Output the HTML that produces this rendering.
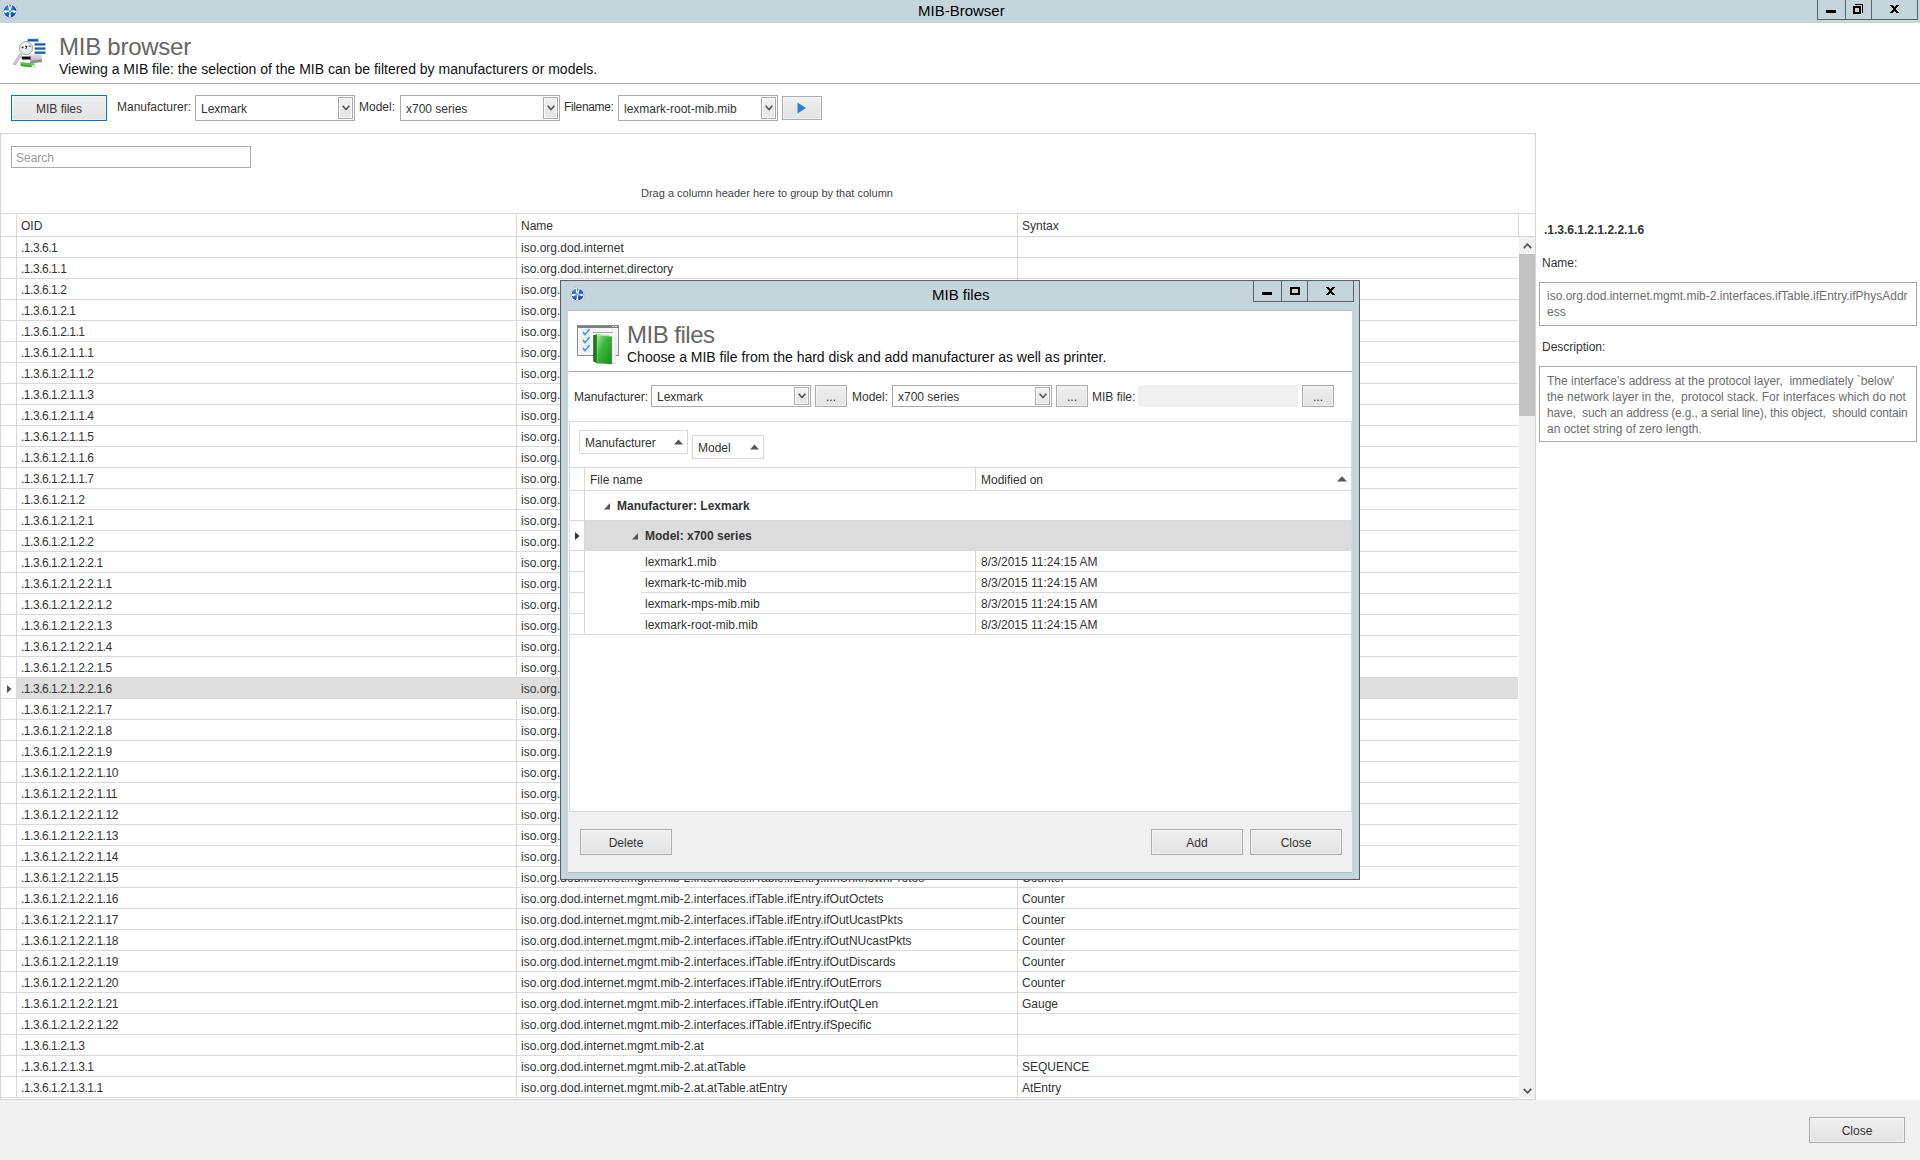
<!DOCTYPE html><html><head><meta charset="utf-8"><style>
html,body{margin:0;padding:0;}
body{width:1920px;height:1160px;position:relative;overflow:hidden;background:#fff;font-family:"Liberation Sans",sans-serif;}
body div, body svg{position:absolute;}
.t{white-space:pre;}
</style></head><body>
<div style="left:0px;top:0px;width:1920px;height:23px;background:#c4d6dc"></div>
<svg style="left:2px;top:3px" width="16" height="16" viewBox="0 0 16 16">
<defs><radialGradient id="aig2" cx="0.4" cy="0.35" r="0.7"><stop offset="0" stop-color="#3f8fdc"/><stop offset="1" stop-color="#0048a8"/></radialGradient></defs>
<circle cx="8" cy="8" r="7.4" fill="#fff" stroke="#a9a9a9" stroke-width="0.9" stroke-dasharray="1.2 0.8"/>
<circle cx="8" cy="8" r="6.4" fill="url(#aig2)"/>
<path d="M8 8 L6.6 2 M8 8 L9.6 2.2 M8 8 L2.2 8.6 M8 8 L13.8 8.6 M8 8 L7.8 14" stroke="#fff" stroke-width="1.3"/>
<circle cx="3.6" cy="8.6" r="1.3" fill="#fff"/><circle cx="12.4" cy="8.6" r="1.3" fill="#fff"/><circle cx="7.8" cy="13" r="1.1" fill="#fff"/>
<circle cx="8" cy="8" r="1.1" fill="#8a8a8a"/>
</svg>
<div class="t" style="left:918px;top:3px;font-size:15px;line-height:15px;color:#000;">MIB-Browser</div>
<div style="left:1817px;top:0px;width:101px;height:20px;border:1px solid #5f6368;border-top:none;box-sizing:border-box"></div>
<div style="left:1845px;top:0px;width:1px;height:20px;background:#5f6368"></div>
<div style="left:1871px;top:0px;width:1px;height:20px;background:#5f6368"></div>
<div style="left:1826px;top:10px;width:10px;height:3px;background:#000"></div>
<div style="left:1855px;top:4px;width:8px;height:9px;border:1px solid #000;border-left:none;border-bottom:none;box-sizing:border-box"></div>
<div style="left:1853px;top:6px;width:8px;height:8px;border:2px solid #000;box-sizing:border-box"></div>
<svg style="left:1890px;top:5px" width="9" height="8" viewBox="0 0 9 8" shape-rendering="crispEdges"><path d="M0 0h3v1h-3zM6 0h3v1h-3zM1 1h3v1h-3zM5 1h3v1h-3zM2 2h5v1h-5zM3 3h3v1h-3zM3 4h3v1h-3zM2 5h5v1h-5zM1 6h3v1h-3zM5 6h3v1h-3zM0 7h3v1h-3zM6 7h3v1h-3z" fill="#000"/></svg>
<svg style="left:10px;top:35px" width="40" height="37" viewBox="0 0 40 37">
<defs>
<linearGradient id="hb" x1="0" y1="0" x2="0" y2="1"><stop offset="0" stop-color="#2a78c8"/><stop offset="1" stop-color="#0a4488"/></linearGradient>
<linearGradient id="pr" x1="0" y1="0" x2="0" y2="1"><stop offset="0" stop-color="#e6e6e6"/><stop offset="1" stop-color="#a9a9a9"/></linearGradient>
<radialGradient id="lens" cx="0.45" cy="0.4" r="0.6"><stop offset="0" stop-color="#ffffff"/><stop offset="1" stop-color="#d5e3ee"/></radialGradient>
</defs>
<rect x="17.3" y="3.8" width="11.4" height="3" fill="url(#hb)" stroke="#d9dde2" stroke-width="0.5"/>
<rect x="24.6" y="8" width="11" height="2.8" fill="url(#hb)" stroke="#d9dde2" stroke-width="0.5"/>
<rect x="24.6" y="12.1" width="11" height="2.8" fill="url(#hb)" stroke="#d9dde2" stroke-width="0.5"/>
<rect x="24.6" y="16.2" width="11" height="2.8" fill="url(#hb)" stroke="#d9dde2" stroke-width="0.5"/>
<path d="M19 19.5 L31.5 19 L32 26 L20 27.5 Z" fill="url(#pr)"/>
<path d="M19 26 L32 24.5 L32 27 L21 28.5 Z" fill="#8d8d8d"/>
<path d="M11.5 21.5 L20.5 21.5 L20.5 25 L12 25 Z" fill="#111"/>
<path d="M11.5 24.5 L20 24.5 L20.5 27 L12 27 Z" fill="#f4f4f4"/>
<path d="M10.5 27 L24.5 28.5 L25 32.5 L11 31 Z" fill="#5cbf4e"/>
<path d="M10.5 29.5 L24.5 31 L25 32.5 L11 31 Z" fill="#3a9a34"/>
<path d="M21.5 30 L26 30.5 L26.5 33.5 L22 33 Z" fill="#e8e8e8"/>
<path d="M10.5 20 L4.8 28.7" stroke="#b7b7b7" stroke-width="3.2" stroke-linecap="round"/>
<path d="M10.5 20 L4.8 28.7" stroke="#e9e9e9" stroke-width="1.4" stroke-dasharray="1 1"/>
<circle cx="16" cy="13.1" r="6.6" fill="url(#lens)" stroke="#a8a8a8" stroke-width="1"/>
<circle cx="12.6" cy="12.4" r="0.9" fill="#111"/>
<path d="M15 11.2 L17 11.2 L15.6 14" fill="none" stroke="#111" stroke-width="1"/>
<path d="M18.8 11.2 L20.6 11.2" stroke="#222" stroke-width="1"/>
<path d="M16.5 14.2 L18.8 14.2" stroke="#bbb" stroke-width="0.8"/>
</svg>
<div class="t" style="left:59px;top:35px;font-size:24px;line-height:24px;color:#666666;letter-spacing:-0.25px;">MIB browser</div>
<div class="t" style="left:59px;top:62px;font-size:14px;line-height:14px;color:#101010;">Viewing a MIB file: the selection of the MIB can be filtered by manufacturers or models.</div>
<div style="left:0px;top:83px;width:1920px;height:1px;background:#a8a8a8"></div>
<div style="left:11px;top:95px;width:96px;height:26px;background:linear-gradient(#efefef,#e3e3e3);border:1px solid #0a6fc6;box-sizing:border-box;box-shadow:inset 0 0 0 1px rgba(255,255,255,0.35)"></div>
<div class="t" style="left:11px;top:103px;width:96px;text-align:center;font-size:12px;line-height:12px;color:#333333">MIB files</div>
<div class="t" style="left:117px;top:101px;font-size:12px;line-height:12px;color:#333333;">Manufacturer:</div>
<div style="left:195px;top:95px;width:160px;height:26px;background:#fff;border:1px solid #ababab;box-sizing:border-box"></div>
<div style="left:338px;top:97px;width:15px;height:22px;background:linear-gradient(#f0f0f0,#e5e5e5);border:1px solid #ababab;box-sizing:border-box;box-shadow:inset 0 0 0 1px #fafafa"></div>
<svg style="left:342px;top:105px" width="8" height="6" viewBox="0 0 8 6"><path d="M0.6 0.8 L4 4.6 L7.4 0.8" fill="none" stroke="#555" stroke-width="1.6"/></svg>
<div class="t" style="left:201px;top:103px;font-size:12px;line-height:12px;color:#333333;">Lexmark</div>
<div class="t" style="left:359px;top:101px;font-size:12px;line-height:12px;color:#333333;">Model:</div>
<div style="left:400px;top:95px;width:160px;height:26px;background:#fff;border:1px solid #ababab;box-sizing:border-box"></div>
<div style="left:543px;top:97px;width:15px;height:22px;background:linear-gradient(#f0f0f0,#e5e5e5);border:1px solid #ababab;box-sizing:border-box;box-shadow:inset 0 0 0 1px #fafafa"></div>
<svg style="left:547px;top:105px" width="8" height="6" viewBox="0 0 8 6"><path d="M0.6 0.8 L4 4.6 L7.4 0.8" fill="none" stroke="#555" stroke-width="1.6"/></svg>
<div class="t" style="left:406px;top:103px;font-size:12px;line-height:12px;color:#333333;">x700 series</div>
<div class="t" style="left:564px;top:101px;font-size:12px;line-height:12px;color:#333333;letter-spacing:-0.35px;">Filename:</div>
<div style="left:618px;top:95px;width:160px;height:26px;background:#fff;border:1px solid #ababab;box-sizing:border-box"></div>
<div style="left:761px;top:97px;width:15px;height:22px;background:linear-gradient(#f0f0f0,#e5e5e5);border:1px solid #ababab;box-sizing:border-box;box-shadow:inset 0 0 0 1px #fafafa"></div>
<svg style="left:765px;top:105px" width="8" height="6" viewBox="0 0 8 6"><path d="M0.6 0.8 L4 4.6 L7.4 0.8" fill="none" stroke="#555" stroke-width="1.6"/></svg>
<div class="t" style="left:624px;top:103px;font-size:12px;line-height:12px;color:#333333;">lexmark-root-mib.mib</div>
<div style="left:782px;top:96px;width:40px;height:24px;background:linear-gradient(#efefef,#e3e3e3);border:1px solid #adadad;box-sizing:border-box;box-shadow:inset 0 0 0 1px rgba(255,255,255,0.35)"></div>
<svg style="left:797px;top:102px" width="10" height="12" viewBox="0 0 10 12"><path d="M0.5 0.5 L9 6 L0.5 11.5 Z" fill="#2f7fd8"/></svg>
<div style="left:0px;top:133px;width:1536px;height:967px;border:1px solid #d5d5d5;box-sizing:border-box"></div>
<div style="left:11px;top:146px;width:240px;height:22px;border:1px solid #ababab;box-sizing:border-box"></div>
<div class="t" style="left:16px;top:152px;font-size:12px;line-height:12px;color:#9a9a9a;">Search</div>
<div class="t" style="left:641px;top:188px;font-size:11px;line-height:11px;color:#444;">Drag a column header here to group by that column</div>
<div style="left:1px;top:213px;width:1534px;height:1px;background:#d9d9d9"></div>
<div style="left:1px;top:236px;width:1534px;height:1px;background:#d9d9d9"></div>
<div class="t" style="left:21px;top:220px;font-size:12px;line-height:12px;color:#333333;">OID</div>
<div class="t" style="left:521px;top:220px;font-size:12px;line-height:12px;color:#333333;">Name</div>
<div class="t" style="left:1022px;top:220px;font-size:12px;line-height:12px;color:#333333;">Syntax</div>
<div style="left:16px;top:213px;width:1px;height:884px;background:#d9d9d9"></div>
<div style="left:516px;top:213px;width:1px;height:884px;background:#d9d9d9"></div>
<div style="left:1017px;top:213px;width:1px;height:884px;background:#d9d9d9"></div>
<div style="left:1518px;top:213px;width:1px;height:23px;background:#d9d9d9"></div>
<div style="left:1px;top:257px;width:1517px;height:1px;background:#d9d9d9"></div>
<div class="t" style="left:21px;top:242px;font-size:12px;line-height:12px;color:#333333;letter-spacing:-0.47px;">.1.3.6.1</div>
<div class="t" style="left:521px;top:242px;font-size:12px;line-height:12px;color:#333333;">iso.org.dod.internet</div>
<div style="left:1px;top:278px;width:1517px;height:1px;background:#d9d9d9"></div>
<div class="t" style="left:21px;top:263px;font-size:12px;line-height:12px;color:#333333;letter-spacing:-0.47px;">.1.3.6.1.1</div>
<div class="t" style="left:521px;top:263px;font-size:12px;line-height:12px;color:#333333;">iso.org.dod.internet.directory</div>
<div style="left:1px;top:299px;width:1517px;height:1px;background:#d9d9d9"></div>
<div class="t" style="left:21px;top:284px;font-size:12px;line-height:12px;color:#333333;letter-spacing:-0.47px;">.1.3.6.1.2</div>
<div class="t" style="left:521px;top:284px;font-size:12px;line-height:12px;color:#333333;">iso.org.dod.internet.mgmt</div>
<div style="left:1px;top:320px;width:1517px;height:1px;background:#d9d9d9"></div>
<div class="t" style="left:21px;top:305px;font-size:12px;line-height:12px;color:#333333;letter-spacing:-0.47px;">.1.3.6.1.2.1</div>
<div class="t" style="left:521px;top:305px;font-size:12px;line-height:12px;color:#333333;">iso.org.dod.internet.mgmt.mib-2</div>
<div style="left:1px;top:341px;width:1517px;height:1px;background:#d9d9d9"></div>
<div class="t" style="left:21px;top:326px;font-size:12px;line-height:12px;color:#333333;letter-spacing:-0.47px;">.1.3.6.1.2.1.1</div>
<div class="t" style="left:521px;top:326px;font-size:12px;line-height:12px;color:#333333;">iso.org.dod.internet.mgmt.mib-2.system</div>
<div style="left:1px;top:362px;width:1517px;height:1px;background:#d9d9d9"></div>
<div class="t" style="left:21px;top:347px;font-size:12px;line-height:12px;color:#333333;letter-spacing:-0.47px;">.1.3.6.1.2.1.1.1</div>
<div class="t" style="left:521px;top:347px;font-size:12px;line-height:12px;color:#333333;">iso.org.dod.internet.mgmt.mib-2.system.sysDescr</div>
<div class="t" style="left:1022px;top:347px;font-size:12px;line-height:12px;color:#333333;">DisplayString</div>
<div style="left:1px;top:383px;width:1517px;height:1px;background:#d9d9d9"></div>
<div class="t" style="left:21px;top:368px;font-size:12px;line-height:12px;color:#333333;letter-spacing:-0.47px;">.1.3.6.1.2.1.1.2</div>
<div class="t" style="left:521px;top:368px;font-size:12px;line-height:12px;color:#333333;">iso.org.dod.internet.mgmt.mib-2.system.sysObjectID</div>
<div class="t" style="left:1022px;top:368px;font-size:12px;line-height:12px;color:#333333;">OBJECT IDENTIFIER</div>
<div style="left:1px;top:404px;width:1517px;height:1px;background:#d9d9d9"></div>
<div class="t" style="left:21px;top:389px;font-size:12px;line-height:12px;color:#333333;letter-spacing:-0.47px;">.1.3.6.1.2.1.1.3</div>
<div class="t" style="left:521px;top:389px;font-size:12px;line-height:12px;color:#333333;">iso.org.dod.internet.mgmt.mib-2.system.sysUpTime</div>
<div class="t" style="left:1022px;top:389px;font-size:12px;line-height:12px;color:#333333;">TimeTicks</div>
<div style="left:1px;top:425px;width:1517px;height:1px;background:#d9d9d9"></div>
<div class="t" style="left:21px;top:410px;font-size:12px;line-height:12px;color:#333333;letter-spacing:-0.47px;">.1.3.6.1.2.1.1.4</div>
<div class="t" style="left:521px;top:410px;font-size:12px;line-height:12px;color:#333333;">iso.org.dod.internet.mgmt.mib-2.system.sysContact</div>
<div class="t" style="left:1022px;top:410px;font-size:12px;line-height:12px;color:#333333;">DisplayString</div>
<div style="left:1px;top:446px;width:1517px;height:1px;background:#d9d9d9"></div>
<div class="t" style="left:21px;top:431px;font-size:12px;line-height:12px;color:#333333;letter-spacing:-0.47px;">.1.3.6.1.2.1.1.5</div>
<div class="t" style="left:521px;top:431px;font-size:12px;line-height:12px;color:#333333;">iso.org.dod.internet.mgmt.mib-2.system.sysName</div>
<div class="t" style="left:1022px;top:431px;font-size:12px;line-height:12px;color:#333333;">DisplayString</div>
<div style="left:1px;top:467px;width:1517px;height:1px;background:#d9d9d9"></div>
<div class="t" style="left:21px;top:452px;font-size:12px;line-height:12px;color:#333333;letter-spacing:-0.47px;">.1.3.6.1.2.1.1.6</div>
<div class="t" style="left:521px;top:452px;font-size:12px;line-height:12px;color:#333333;">iso.org.dod.internet.mgmt.mib-2.system.sysLocation</div>
<div class="t" style="left:1022px;top:452px;font-size:12px;line-height:12px;color:#333333;">DisplayString</div>
<div style="left:1px;top:488px;width:1517px;height:1px;background:#d9d9d9"></div>
<div class="t" style="left:21px;top:473px;font-size:12px;line-height:12px;color:#333333;letter-spacing:-0.47px;">.1.3.6.1.2.1.1.7</div>
<div class="t" style="left:521px;top:473px;font-size:12px;line-height:12px;color:#333333;">iso.org.dod.internet.mgmt.mib-2.system.sysServices</div>
<div class="t" style="left:1022px;top:473px;font-size:12px;line-height:12px;color:#333333;">INTEGER</div>
<div style="left:1px;top:509px;width:1517px;height:1px;background:#d9d9d9"></div>
<div class="t" style="left:21px;top:494px;font-size:12px;line-height:12px;color:#333333;letter-spacing:-0.47px;">.1.3.6.1.2.1.2</div>
<div class="t" style="left:521px;top:494px;font-size:12px;line-height:12px;color:#333333;">iso.org.dod.internet.mgmt.mib-2.interfaces</div>
<div style="left:1px;top:530px;width:1517px;height:1px;background:#d9d9d9"></div>
<div class="t" style="left:21px;top:515px;font-size:12px;line-height:12px;color:#333333;letter-spacing:-0.47px;">.1.3.6.1.2.1.2.1</div>
<div class="t" style="left:521px;top:515px;font-size:12px;line-height:12px;color:#333333;">iso.org.dod.internet.mgmt.mib-2.interfaces.ifNumber</div>
<div class="t" style="left:1022px;top:515px;font-size:12px;line-height:12px;color:#333333;">INTEGER</div>
<div style="left:1px;top:551px;width:1517px;height:1px;background:#d9d9d9"></div>
<div class="t" style="left:21px;top:536px;font-size:12px;line-height:12px;color:#333333;letter-spacing:-0.47px;">.1.3.6.1.2.1.2.2</div>
<div class="t" style="left:521px;top:536px;font-size:12px;line-height:12px;color:#333333;">iso.org.dod.internet.mgmt.mib-2.interfaces.ifTable</div>
<div class="t" style="left:1022px;top:536px;font-size:12px;line-height:12px;color:#333333;">SEQUENCE</div>
<div style="left:1px;top:572px;width:1517px;height:1px;background:#d9d9d9"></div>
<div class="t" style="left:21px;top:557px;font-size:12px;line-height:12px;color:#333333;letter-spacing:-0.47px;">.1.3.6.1.2.1.2.2.1</div>
<div class="t" style="left:521px;top:557px;font-size:12px;line-height:12px;color:#333333;">iso.org.dod.internet.mgmt.mib-2.interfaces.ifTable.ifEntry</div>
<div class="t" style="left:1022px;top:557px;font-size:12px;line-height:12px;color:#333333;">IfEntry</div>
<div style="left:1px;top:593px;width:1517px;height:1px;background:#d9d9d9"></div>
<div class="t" style="left:21px;top:578px;font-size:12px;line-height:12px;color:#333333;letter-spacing:-0.47px;">.1.3.6.1.2.1.2.2.1.1</div>
<div class="t" style="left:521px;top:578px;font-size:12px;line-height:12px;color:#333333;">iso.org.dod.internet.mgmt.mib-2.interfaces.ifTable.ifEntry.ifIndex</div>
<div class="t" style="left:1022px;top:578px;font-size:12px;line-height:12px;color:#333333;">INTEGER</div>
<div style="left:1px;top:614px;width:1517px;height:1px;background:#d9d9d9"></div>
<div class="t" style="left:21px;top:599px;font-size:12px;line-height:12px;color:#333333;letter-spacing:-0.47px;">.1.3.6.1.2.1.2.2.1.2</div>
<div class="t" style="left:521px;top:599px;font-size:12px;line-height:12px;color:#333333;">iso.org.dod.internet.mgmt.mib-2.interfaces.ifTable.ifEntry.ifDescr</div>
<div class="t" style="left:1022px;top:599px;font-size:12px;line-height:12px;color:#333333;">DisplayString</div>
<div style="left:1px;top:635px;width:1517px;height:1px;background:#d9d9d9"></div>
<div class="t" style="left:21px;top:620px;font-size:12px;line-height:12px;color:#333333;letter-spacing:-0.47px;">.1.3.6.1.2.1.2.2.1.3</div>
<div class="t" style="left:521px;top:620px;font-size:12px;line-height:12px;color:#333333;">iso.org.dod.internet.mgmt.mib-2.interfaces.ifTable.ifEntry.ifType</div>
<div class="t" style="left:1022px;top:620px;font-size:12px;line-height:12px;color:#333333;">INTEGER</div>
<div style="left:1px;top:656px;width:1517px;height:1px;background:#d9d9d9"></div>
<div class="t" style="left:21px;top:641px;font-size:12px;line-height:12px;color:#333333;letter-spacing:-0.47px;">.1.3.6.1.2.1.2.2.1.4</div>
<div class="t" style="left:521px;top:641px;font-size:12px;line-height:12px;color:#333333;">iso.org.dod.internet.mgmt.mib-2.interfaces.ifTable.ifEntry.ifMtu</div>
<div class="t" style="left:1022px;top:641px;font-size:12px;line-height:12px;color:#333333;">INTEGER</div>
<div style="left:1px;top:677px;width:1517px;height:1px;background:#d9d9d9"></div>
<div class="t" style="left:21px;top:662px;font-size:12px;line-height:12px;color:#333333;letter-spacing:-0.47px;">.1.3.6.1.2.1.2.2.1.5</div>
<div class="t" style="left:521px;top:662px;font-size:12px;line-height:12px;color:#333333;">iso.org.dod.internet.mgmt.mib-2.interfaces.ifTable.ifEntry.ifSpeed</div>
<div class="t" style="left:1022px;top:662px;font-size:12px;line-height:12px;color:#333333;">Gauge</div>
<div style="left:17px;top:678px;width:1501px;height:20px;background:#dedede"></div>
<svg style="left:7px;top:685px" width="5" height="8" viewBox="0 0 5 8"><path d="M0 0 L4.5 4 L0 8 Z" fill="#555"/></svg>
<div style="left:1px;top:698px;width:1517px;height:1px;background:#d9d9d9"></div>
<div class="t" style="left:21px;top:683px;font-size:12px;line-height:12px;color:#333333;letter-spacing:-0.47px;">.1.3.6.1.2.1.2.2.1.6</div>
<div class="t" style="left:521px;top:683px;font-size:12px;line-height:12px;color:#333333;">iso.org.dod.internet.mgmt.mib-2.interfaces.ifTable.ifEntry.ifPhysAddress</div>
<div class="t" style="left:1022px;top:683px;font-size:12px;line-height:12px;color:#333333;">PhysAddress</div>
<div style="left:1px;top:719px;width:1517px;height:1px;background:#d9d9d9"></div>
<div class="t" style="left:21px;top:704px;font-size:12px;line-height:12px;color:#333333;letter-spacing:-0.47px;">.1.3.6.1.2.1.2.2.1.7</div>
<div class="t" style="left:521px;top:704px;font-size:12px;line-height:12px;color:#333333;">iso.org.dod.internet.mgmt.mib-2.interfaces.ifTable.ifEntry.ifAdminStatus</div>
<div class="t" style="left:1022px;top:704px;font-size:12px;line-height:12px;color:#333333;">INTEGER</div>
<div style="left:1px;top:740px;width:1517px;height:1px;background:#d9d9d9"></div>
<div class="t" style="left:21px;top:725px;font-size:12px;line-height:12px;color:#333333;letter-spacing:-0.47px;">.1.3.6.1.2.1.2.2.1.8</div>
<div class="t" style="left:521px;top:725px;font-size:12px;line-height:12px;color:#333333;">iso.org.dod.internet.mgmt.mib-2.interfaces.ifTable.ifEntry.ifOperStatus</div>
<div class="t" style="left:1022px;top:725px;font-size:12px;line-height:12px;color:#333333;">INTEGER</div>
<div style="left:1px;top:761px;width:1517px;height:1px;background:#d9d9d9"></div>
<div class="t" style="left:21px;top:746px;font-size:12px;line-height:12px;color:#333333;letter-spacing:-0.47px;">.1.3.6.1.2.1.2.2.1.9</div>
<div class="t" style="left:521px;top:746px;font-size:12px;line-height:12px;color:#333333;">iso.org.dod.internet.mgmt.mib-2.interfaces.ifTable.ifEntry.ifLastChange</div>
<div class="t" style="left:1022px;top:746px;font-size:12px;line-height:12px;color:#333333;">TimeTicks</div>
<div style="left:1px;top:782px;width:1517px;height:1px;background:#d9d9d9"></div>
<div class="t" style="left:21px;top:767px;font-size:12px;line-height:12px;color:#333333;letter-spacing:-0.47px;">.1.3.6.1.2.1.2.2.1.10</div>
<div class="t" style="left:521px;top:767px;font-size:12px;line-height:12px;color:#333333;">iso.org.dod.internet.mgmt.mib-2.interfaces.ifTable.ifEntry.ifInOctets</div>
<div class="t" style="left:1022px;top:767px;font-size:12px;line-height:12px;color:#333333;">Counter</div>
<div style="left:1px;top:803px;width:1517px;height:1px;background:#d9d9d9"></div>
<div class="t" style="left:21px;top:788px;font-size:12px;line-height:12px;color:#333333;letter-spacing:-0.47px;">.1.3.6.1.2.1.2.2.1.11</div>
<div class="t" style="left:521px;top:788px;font-size:12px;line-height:12px;color:#333333;">iso.org.dod.internet.mgmt.mib-2.interfaces.ifTable.ifEntry.ifInUcastPkts</div>
<div class="t" style="left:1022px;top:788px;font-size:12px;line-height:12px;color:#333333;">Counter</div>
<div style="left:1px;top:824px;width:1517px;height:1px;background:#d9d9d9"></div>
<div class="t" style="left:21px;top:809px;font-size:12px;line-height:12px;color:#333333;letter-spacing:-0.47px;">.1.3.6.1.2.1.2.2.1.12</div>
<div class="t" style="left:521px;top:809px;font-size:12px;line-height:12px;color:#333333;">iso.org.dod.internet.mgmt.mib-2.interfaces.ifTable.ifEntry.ifInNUcastPkts</div>
<div class="t" style="left:1022px;top:809px;font-size:12px;line-height:12px;color:#333333;">Counter</div>
<div style="left:1px;top:845px;width:1517px;height:1px;background:#d9d9d9"></div>
<div class="t" style="left:21px;top:830px;font-size:12px;line-height:12px;color:#333333;letter-spacing:-0.47px;">.1.3.6.1.2.1.2.2.1.13</div>
<div class="t" style="left:521px;top:830px;font-size:12px;line-height:12px;color:#333333;">iso.org.dod.internet.mgmt.mib-2.interfaces.ifTable.ifEntry.ifInDiscards</div>
<div class="t" style="left:1022px;top:830px;font-size:12px;line-height:12px;color:#333333;">Counter</div>
<div style="left:1px;top:866px;width:1517px;height:1px;background:#d9d9d9"></div>
<div class="t" style="left:21px;top:851px;font-size:12px;line-height:12px;color:#333333;letter-spacing:-0.47px;">.1.3.6.1.2.1.2.2.1.14</div>
<div class="t" style="left:521px;top:851px;font-size:12px;line-height:12px;color:#333333;">iso.org.dod.internet.mgmt.mib-2.interfaces.ifTable.ifEntry.ifInErrors</div>
<div class="t" style="left:1022px;top:851px;font-size:12px;line-height:12px;color:#333333;">Counter</div>
<div style="left:1px;top:887px;width:1517px;height:1px;background:#d9d9d9"></div>
<div class="t" style="left:21px;top:872px;font-size:12px;line-height:12px;color:#333333;letter-spacing:-0.47px;">.1.3.6.1.2.1.2.2.1.15</div>
<div class="t" style="left:521px;top:872px;font-size:12px;line-height:12px;color:#333333;">iso.org.dod.internet.mgmt.mib-2.interfaces.ifTable.ifEntry.ifInUnknownProtos</div>
<div class="t" style="left:1022px;top:872px;font-size:12px;line-height:12px;color:#333333;">Counter</div>
<div style="left:1px;top:908px;width:1517px;height:1px;background:#d9d9d9"></div>
<div class="t" style="left:21px;top:893px;font-size:12px;line-height:12px;color:#333333;letter-spacing:-0.47px;">.1.3.6.1.2.1.2.2.1.16</div>
<div class="t" style="left:521px;top:893px;font-size:12px;line-height:12px;color:#333333;">iso.org.dod.internet.mgmt.mib-2.interfaces.ifTable.ifEntry.ifOutOctets</div>
<div class="t" style="left:1022px;top:893px;font-size:12px;line-height:12px;color:#333333;">Counter</div>
<div style="left:1px;top:929px;width:1517px;height:1px;background:#d9d9d9"></div>
<div class="t" style="left:21px;top:914px;font-size:12px;line-height:12px;color:#333333;letter-spacing:-0.47px;">.1.3.6.1.2.1.2.2.1.17</div>
<div class="t" style="left:521px;top:914px;font-size:12px;line-height:12px;color:#333333;">iso.org.dod.internet.mgmt.mib-2.interfaces.ifTable.ifEntry.ifOutUcastPkts</div>
<div class="t" style="left:1022px;top:914px;font-size:12px;line-height:12px;color:#333333;">Counter</div>
<div style="left:1px;top:950px;width:1517px;height:1px;background:#d9d9d9"></div>
<div class="t" style="left:21px;top:935px;font-size:12px;line-height:12px;color:#333333;letter-spacing:-0.47px;">.1.3.6.1.2.1.2.2.1.18</div>
<div class="t" style="left:521px;top:935px;font-size:12px;line-height:12px;color:#333333;">iso.org.dod.internet.mgmt.mib-2.interfaces.ifTable.ifEntry.ifOutNUcastPkts</div>
<div class="t" style="left:1022px;top:935px;font-size:12px;line-height:12px;color:#333333;">Counter</div>
<div style="left:1px;top:971px;width:1517px;height:1px;background:#d9d9d9"></div>
<div class="t" style="left:21px;top:956px;font-size:12px;line-height:12px;color:#333333;letter-spacing:-0.47px;">.1.3.6.1.2.1.2.2.1.19</div>
<div class="t" style="left:521px;top:956px;font-size:12px;line-height:12px;color:#333333;">iso.org.dod.internet.mgmt.mib-2.interfaces.ifTable.ifEntry.ifOutDiscards</div>
<div class="t" style="left:1022px;top:956px;font-size:12px;line-height:12px;color:#333333;">Counter</div>
<div style="left:1px;top:992px;width:1517px;height:1px;background:#d9d9d9"></div>
<div class="t" style="left:21px;top:977px;font-size:12px;line-height:12px;color:#333333;letter-spacing:-0.47px;">.1.3.6.1.2.1.2.2.1.20</div>
<div class="t" style="left:521px;top:977px;font-size:12px;line-height:12px;color:#333333;">iso.org.dod.internet.mgmt.mib-2.interfaces.ifTable.ifEntry.ifOutErrors</div>
<div class="t" style="left:1022px;top:977px;font-size:12px;line-height:12px;color:#333333;">Counter</div>
<div style="left:1px;top:1013px;width:1517px;height:1px;background:#d9d9d9"></div>
<div class="t" style="left:21px;top:998px;font-size:12px;line-height:12px;color:#333333;letter-spacing:-0.47px;">.1.3.6.1.2.1.2.2.1.21</div>
<div class="t" style="left:521px;top:998px;font-size:12px;line-height:12px;color:#333333;">iso.org.dod.internet.mgmt.mib-2.interfaces.ifTable.ifEntry.ifOutQLen</div>
<div class="t" style="left:1022px;top:998px;font-size:12px;line-height:12px;color:#333333;">Gauge</div>
<div style="left:1px;top:1034px;width:1517px;height:1px;background:#d9d9d9"></div>
<div class="t" style="left:21px;top:1019px;font-size:12px;line-height:12px;color:#333333;letter-spacing:-0.47px;">.1.3.6.1.2.1.2.2.1.22</div>
<div class="t" style="left:521px;top:1019px;font-size:12px;line-height:12px;color:#333333;">iso.org.dod.internet.mgmt.mib-2.interfaces.ifTable.ifEntry.ifSpecific</div>
<div style="left:1px;top:1055px;width:1517px;height:1px;background:#d9d9d9"></div>
<div class="t" style="left:21px;top:1040px;font-size:12px;line-height:12px;color:#333333;letter-spacing:-0.47px;">.1.3.6.1.2.1.3</div>
<div class="t" style="left:521px;top:1040px;font-size:12px;line-height:12px;color:#333333;">iso.org.dod.internet.mgmt.mib-2.at</div>
<div style="left:1px;top:1076px;width:1517px;height:1px;background:#d9d9d9"></div>
<div class="t" style="left:21px;top:1061px;font-size:12px;line-height:12px;color:#333333;letter-spacing:-0.47px;">.1.3.6.1.2.1.3.1</div>
<div class="t" style="left:521px;top:1061px;font-size:12px;line-height:12px;color:#333333;">iso.org.dod.internet.mgmt.mib-2.at.atTable</div>
<div class="t" style="left:1022px;top:1061px;font-size:12px;line-height:12px;color:#333333;">SEQUENCE</div>
<div style="left:1px;top:1097px;width:1517px;height:1px;background:#d9d9d9"></div>
<div class="t" style="left:21px;top:1082px;font-size:12px;line-height:12px;color:#333333;letter-spacing:-0.47px;">.1.3.6.1.2.1.3.1.1</div>
<div class="t" style="left:521px;top:1082px;font-size:12px;line-height:12px;color:#333333;">iso.org.dod.internet.mgmt.mib-2.at.atTable.atEntry</div>
<div class="t" style="left:1022px;top:1082px;font-size:12px;line-height:12px;color:#333333;">AtEntry</div>
<div style="left:1519px;top:237px;width:16px;height:861px;background:#f0f0f0"></div>
<div style="left:1519px;top:254px;width:16px;height:162px;background:#c2c2c2"></div>
<svg style="left:1523px;top:243px" width="9" height="6" viewBox="0 0 9 6"><path d="M0.8 5.2 L4.5 1.2 L8.2 5.2" fill="none" stroke="#555" stroke-width="1.7"/></svg>
<svg style="left:1523px;top:1088px" width="9" height="6" viewBox="0 0 9 6"><path d="M0.8 0.8 L4.5 4.8 L8.2 0.8" fill="none" stroke="#555" stroke-width="1.7"/></svg>
<div class="t" style="left:1544px;top:224px;font-size:12px;line-height:12px;color:#333333;font-weight:bold;">.1.3.6.1.2.1.2.2.1.6</div>
<div class="t" style="left:1542px;top:257px;font-size:12px;line-height:12px;color:#333333;">Name:</div>
<div style="left:1539px;top:282px;width:378px;height:44px;border:1px solid #ababab;box-sizing:border-box"></div>
<div class="t" style="left:1547px;top:290px;font-size:12px;line-height:12px;color:#6d6d6d;">iso.org.dod.internet.mgmt.mib-2.interfaces.ifTable.ifEntry.ifPhysAddr</div>
<div class="t" style="left:1547px;top:306px;font-size:12px;line-height:12px;color:#6d6d6d;">ess</div>
<div class="t" style="left:1542px;top:341px;font-size:12px;line-height:12px;color:#333333;">Description:</div>
<div style="left:1539px;top:366px;width:378px;height:76px;border:1px solid #ababab;box-sizing:border-box"></div>
<div class="t" style="left:1547px;top:375px;font-size:12px;line-height:12px;color:#6d6d6d;">The interface's address at the protocol layer,  immediately `below'</div>
<div class="t" style="left:1547px;top:391px;font-size:12px;line-height:12px;color:#6d6d6d;">the network layer in the,  protocol stack. For interfaces which do not</div>
<div class="t" style="left:1547px;top:407px;font-size:12px;line-height:12px;color:#6d6d6d;letter-spacing:-0.14px;">have,  such an address (e.g., a serial line), this object,  should contain</div>
<div class="t" style="left:1547px;top:423px;font-size:12px;line-height:12px;color:#6d6d6d;">an octet string of zero length.</div>
<div style="left:0px;top:1100px;width:1920px;height:60px;background:#f0f0f0"></div>
<div style="left:1809px;top:1117px;width:96px;height:26px;background:linear-gradient(#efefef,#e3e3e3);border:1px solid #adadad;box-sizing:border-box;box-shadow:inset 0 0 0 1px rgba(255,255,255,0.35)"></div>
<div class="t" style="left:1809px;top:1125px;width:96px;text-align:center;font-size:12px;line-height:12px;color:#333333">Close</div>
<div style="left:560px;top:280px;width:800px;height:600px;background:#c4d6dc;border:1px solid #5b6167;box-sizing:border-box"></div>
<svg style="left:570px;top:287px" width="15" height="15" viewBox="0 0 16 16">
<defs><radialGradient id="aig570" cx="0.4" cy="0.35" r="0.7"><stop offset="0" stop-color="#3f8fdc"/><stop offset="1" stop-color="#0048a8"/></radialGradient></defs>
<circle cx="8" cy="8" r="7.4" fill="#fff" stroke="#a9a9a9" stroke-width="0.9" stroke-dasharray="1.2 0.8"/>
<circle cx="8" cy="8" r="6.4" fill="url(#aig570)"/>
<path d="M8 8 L6.6 2 M8 8 L9.6 2.2 M8 8 L2.2 8.6 M8 8 L13.8 8.6 M8 8 L7.8 14" stroke="#fff" stroke-width="1.3"/>
<circle cx="3.6" cy="8.6" r="1.3" fill="#fff"/><circle cx="12.4" cy="8.6" r="1.3" fill="#fff"/><circle cx="7.8" cy="13" r="1.1" fill="#fff"/>
<circle cx="8" cy="8" r="1.1" fill="#8a8a8a"/>
</svg>
<div class="t" style="left:932px;top:287px;font-size:15px;line-height:15px;color:#000;">MIB files</div>
<div style="left:1253px;top:280px;width:101px;height:22px;border:1px solid #5f6368;border-top:none;box-sizing:border-box"></div>
<div style="left:1281px;top:280px;width:1px;height:21px;background:#5f6368"></div>
<div style="left:1307px;top:280px;width:1px;height:21px;background:#5f6368"></div>
<div style="left:1262px;top:292px;width:10px;height:3px;background:#000"></div>
<div style="left:1290px;top:287px;width:10px;height:8px;border:2px solid #000;box-sizing:border-box"></div>
<svg style="left:1326px;top:287px" width="9" height="8" viewBox="0 0 9 8" shape-rendering="crispEdges"><path d="M0 0h3v1h-3zM6 0h3v1h-3zM1 1h3v1h-3zM5 1h3v1h-3zM2 2h5v1h-5zM3 3h3v1h-3zM3 4h3v1h-3zM2 5h5v1h-5zM1 6h3v1h-3zM5 6h3v1h-3zM0 7h3v1h-3zM6 7h3v1h-3z" fill="#000"/></svg>
<div style="left:568px;top:310px;width:784px;height:563px;background:#f0f0f0;border-top:1px solid #aebbc2;border-bottom:1px solid #aebbc2;box-sizing:border-box"></div>
<div style="left:568px;top:311px;width:784px;height:500px;background:#fff"></div>
<svg style="left:577px;top:325px" width="44" height="40" viewBox="0 0 44 40">
<rect x="0.5" y="0.5" width="41" height="30" fill="#f4f4f4" stroke="#8d9094"/>
<rect x="0.5" y="0.5" width="41" height="2.5" fill="#7e8286"/>
<rect x="35" y="1" width="2" height="1" fill="#ddd"/><rect x="38" y="1" width="2" height="1" fill="#ddd"/>
<rect x="6" y="5" width="5" height="5" fill="#fff" stroke="#ccc" stroke-width="0.6"/>
<rect x="6" y="13" width="5" height="5" fill="#fff" stroke="#ccc" stroke-width="0.6"/>
<rect x="6" y="21" width="5" height="5" fill="#fff" stroke="#ccc" stroke-width="0.6"/>
<path d="M6 7 L8 9.5 L12.5 4" fill="none" stroke="#3a9ae8" stroke-width="1.6"/>
<path d="M6 15 L8 17.5 L12.5 12" fill="none" stroke="#3a9ae8" stroke-width="1.6"/>
<path d="M6 23 L8 25.5 L12.5 20" fill="none" stroke="#3a9ae8" stroke-width="1.6"/>
<rect x="16" y="7" width="20" height="0.8" fill="#999"/>
<ellipse cx="33" cy="38.3" rx="6" ry="1.4" fill="#000" opacity="0.18"/>
<path d="M16.3 10.2 L20.2 9.3 L20.2 38.6 L16.3 36.4 Z" fill="url(#spg)"/>
<path d="M20.2 9.3 L35.2 11.2 L35.2 38.9 L20.2 38.6 Z" fill="url(#bookg)"/>
<path d="M20.2 9.3 L35.2 11.2 L36 11.8 L21 10.2 Z" fill="#b9eeb0"/>
<path d="M35.2 11.2 L38.8 12.6 L38.8 37.2 L35.2 38.9 Z" fill="#f7f3f6" stroke="#d8d0d8" stroke-width="0.4"/>
<defs><linearGradient id="bookg" x1="0" y1="0" x2="1" y2="1"><stop offset="0" stop-color="#9be894"/><stop offset="0.4" stop-color="#3db63a"/><stop offset="1" stop-color="#178a1c"/></linearGradient>
<linearGradient id="spg" x1="0" y1="0" x2="1" y2="0"><stop offset="0" stop-color="#0b560e"/><stop offset="1" stop-color="#2e9a30"/></linearGradient></defs>
</svg>
<div class="t" style="left:627px;top:323px;font-size:24px;line-height:24px;color:#666666;letter-spacing:-0.5px;">MIB files</div>
<div class="t" style="left:627px;top:350px;font-size:14px;line-height:14px;color:#101010;">Choose a MIB file from the hard disk and add manufacturer as well as printer.</div>
<div style="left:569px;top:371px;width:783px;height:1px;background:#a8a8a8"></div>
<div class="t" style="left:574px;top:391px;font-size:12px;line-height:12px;color:#333333;">Manufacturer:</div>
<div style="left:651px;top:385px;width:160px;height:22px;background:#fff;border:1px solid #ababab;box-sizing:border-box"></div>
<div style="left:794px;top:387px;width:15px;height:18px;background:linear-gradient(#f0f0f0,#e5e5e5);border:1px solid #ababab;box-sizing:border-box;box-shadow:inset 0 0 0 1px #fafafa"></div>
<svg style="left:798px;top:393px" width="8" height="6" viewBox="0 0 8 6"><path d="M0.6 0.8 L4 4.6 L7.4 0.8" fill="none" stroke="#555" stroke-width="1.6"/></svg>
<div class="t" style="left:657px;top:391px;font-size:12px;line-height:12px;color:#333333;">Lexmark</div>
<div style="left:815px;top:385px;width:32px;height:22px;background:linear-gradient(#efefef,#e3e3e3);border:1px solid #adadad;box-sizing:border-box;box-shadow:inset 0 0 0 1px rgba(255,255,255,0.35)"></div>
<div class="t" style="left:815px;top:391px;width:32px;text-align:center;font-size:12px;line-height:12px;color:#333333">...</div>
<div class="t" style="left:852px;top:391px;font-size:12px;line-height:12px;color:#333333;">Model:</div>
<div style="left:892px;top:385px;width:160px;height:22px;background:#fff;border:1px solid #ababab;box-sizing:border-box"></div>
<div style="left:1035px;top:387px;width:15px;height:18px;background:linear-gradient(#f0f0f0,#e5e5e5);border:1px solid #ababab;box-sizing:border-box;box-shadow:inset 0 0 0 1px #fafafa"></div>
<svg style="left:1039px;top:393px" width="8" height="6" viewBox="0 0 8 6"><path d="M0.6 0.8 L4 4.6 L7.4 0.8" fill="none" stroke="#555" stroke-width="1.6"/></svg>
<div class="t" style="left:898px;top:391px;font-size:12px;line-height:12px;color:#333333;">x700 series</div>
<div style="left:1056px;top:385px;width:32px;height:22px;background:linear-gradient(#efefef,#e3e3e3);border:1px solid #adadad;box-sizing:border-box;box-shadow:inset 0 0 0 1px rgba(255,255,255,0.35)"></div>
<div class="t" style="left:1056px;top:391px;width:32px;text-align:center;font-size:12px;line-height:12px;color:#333333">...</div>
<div class="t" style="left:1092px;top:391px;font-size:12px;line-height:12px;color:#333333;">MIB file:</div>
<div style="left:1138px;top:385px;width:160px;height:22px;background:#f0f0f0"></div>
<div style="left:1302px;top:385px;width:32px;height:22px;background:linear-gradient(#efefef,#e3e3e3);border:1px solid #adadad;box-sizing:border-box;box-shadow:inset 0 0 0 1px rgba(255,255,255,0.35)"></div>
<div class="t" style="left:1302px;top:391px;width:32px;text-align:center;font-size:12px;line-height:12px;color:#333333">...</div>
<div style="left:569px;top:421px;width:783px;height:391px;border:1px solid #d9d9d9;box-sizing:border-box;background:#fff"></div>
<div style="left:579px;top:430px;width:109px;height:24px;border:1px solid #d9d9d9;box-sizing:border-box"></div>
<div class="t" style="left:585px;top:437px;font-size:12px;line-height:12px;color:#333333;">Manufacturer</div>
<svg style="left:674px;top:439px" width="9" height="6" viewBox="0 0 9 6"><path d="M0 5.5 L4.5 0.5 L9 5.5 Z" fill="#555"/></svg>
<div style="left:692px;top:435px;width:72px;height:24px;border:1px solid #d9d9d9;box-sizing:border-box"></div>
<div class="t" style="left:698px;top:442px;font-size:12px;line-height:12px;color:#333333;">Model</div>
<svg style="left:750px;top:444px" width="9" height="6" viewBox="0 0 9 6"><path d="M0 5.5 L4.5 0.5 L9 5.5 Z" fill="#555"/></svg>
<div style="left:570px;top:467px;width:781px;height:1px;background:#d9d9d9"></div>
<div style="left:570px;top:490px;width:781px;height:1px;background:#d9d9d9"></div>
<div style="left:584px;top:467px;width:1px;height:167px;background:#d9d9d9"></div>
<div style="left:975px;top:467px;width:1px;height:23px;background:#d9d9d9"></div>
<div class="t" style="left:590px;top:474px;font-size:12px;line-height:12px;color:#333333;">File name</div>
<div class="t" style="left:981px;top:474px;font-size:12px;line-height:12px;color:#333333;">Modified on</div>
<svg style="left:1337px;top:476px" width="10" height="6" viewBox="0 0 10 6"><path d="M0 5.5 L5 0.3 L10 5.5 Z" fill="#555"/></svg>
<div style="left:570px;top:520px;width:781px;height:1px;background:#d9d9d9"></div>
<svg style="left:604px;top:503px" width="6" height="7" viewBox="0 0 6 7"><path d="M6 0 L6 6.5 L0 6.5 Z" fill="#555"/></svg>
<div class="t" style="left:617px;top:500px;font-size:12px;line-height:12px;color:#333;font-weight:bold;">Manufacturer: Lexmark</div>
<div style="left:585px;top:521px;width:766px;height:29px;background:#dcdcdc"></div>
<svg style="left:575px;top:532px" width="5" height="8" viewBox="0 0 5 8"><path d="M0 0 L4.5 4 L0 8 Z" fill="#333"/></svg>
<svg style="left:632px;top:533px" width="6" height="7" viewBox="0 0 6 7"><path d="M6 0 L6 6.5 L0 6.5 Z" fill="#555"/></svg>
<div class="t" style="left:645px;top:530px;font-size:12px;line-height:12px;color:#333;font-weight:bold;">Model: x700 series</div>
<div style="left:570px;top:550px;width:781px;height:1px;background:#d9d9d9"></div>
<div class="t" style="left:645px;top:556px;font-size:12px;line-height:12px;color:#333333;">lexmark1.mib</div>
<div class="t" style="left:981px;top:556px;font-size:12px;line-height:12px;color:#333333;">8/3/2015 11:24:15 AM</div>
<div style="left:641px;top:571px;width:710px;height:1px;background:#d9d9d9"></div>
<div style="left:570px;top:571px;width:14px;height:1px;background:#d9d9d9"></div>
<div style="left:975px;top:551px;width:1px;height:20px;background:#d9d9d9"></div>
<div class="t" style="left:645px;top:577px;font-size:12px;line-height:12px;color:#333333;">lexmark-tc-mib.mib</div>
<div class="t" style="left:981px;top:577px;font-size:12px;line-height:12px;color:#333333;">8/3/2015 11:24:15 AM</div>
<div style="left:641px;top:592px;width:710px;height:1px;background:#d9d9d9"></div>
<div style="left:570px;top:592px;width:14px;height:1px;background:#d9d9d9"></div>
<div style="left:975px;top:572px;width:1px;height:20px;background:#d9d9d9"></div>
<div class="t" style="left:645px;top:598px;font-size:12px;line-height:12px;color:#333333;">lexmark-mps-mib.mib</div>
<div class="t" style="left:981px;top:598px;font-size:12px;line-height:12px;color:#333333;">8/3/2015 11:24:15 AM</div>
<div style="left:641px;top:613px;width:710px;height:1px;background:#d9d9d9"></div>
<div style="left:570px;top:613px;width:14px;height:1px;background:#d9d9d9"></div>
<div style="left:975px;top:593px;width:1px;height:20px;background:#d9d9d9"></div>
<div class="t" style="left:645px;top:619px;font-size:12px;line-height:12px;color:#333333;">lexmark-root-mib.mib</div>
<div class="t" style="left:981px;top:619px;font-size:12px;line-height:12px;color:#333333;">8/3/2015 11:24:15 AM</div>
<div style="left:570px;top:634px;width:781px;height:1px;background:#d9d9d9"></div>
<div style="left:975px;top:614px;width:1px;height:20px;background:#d9d9d9"></div>
<div style="left:580px;top:829px;width:92px;height:26px;background:linear-gradient(#efefef,#e3e3e3);border:1px solid #adadad;box-sizing:border-box;box-shadow:inset 0 0 0 1px rgba(255,255,255,0.35)"></div>
<div class="t" style="left:580px;top:837px;width:92px;text-align:center;font-size:12px;line-height:12px;color:#333333">Delete</div>
<div style="left:1151px;top:829px;width:92px;height:26px;background:linear-gradient(#efefef,#e3e3e3);border:1px solid #adadad;box-sizing:border-box;box-shadow:inset 0 0 0 1px rgba(255,255,255,0.35)"></div>
<div class="t" style="left:1151px;top:837px;width:92px;text-align:center;font-size:12px;line-height:12px;color:#333333">Add</div>
<div style="left:1250px;top:829px;width:92px;height:26px;background:linear-gradient(#efefef,#e3e3e3);border:1px solid #adadad;box-sizing:border-box;box-shadow:inset 0 0 0 1px rgba(255,255,255,0.35)"></div>
<div class="t" style="left:1250px;top:837px;width:92px;text-align:center;font-size:12px;line-height:12px;color:#333333">Close</div>
</body></html>
